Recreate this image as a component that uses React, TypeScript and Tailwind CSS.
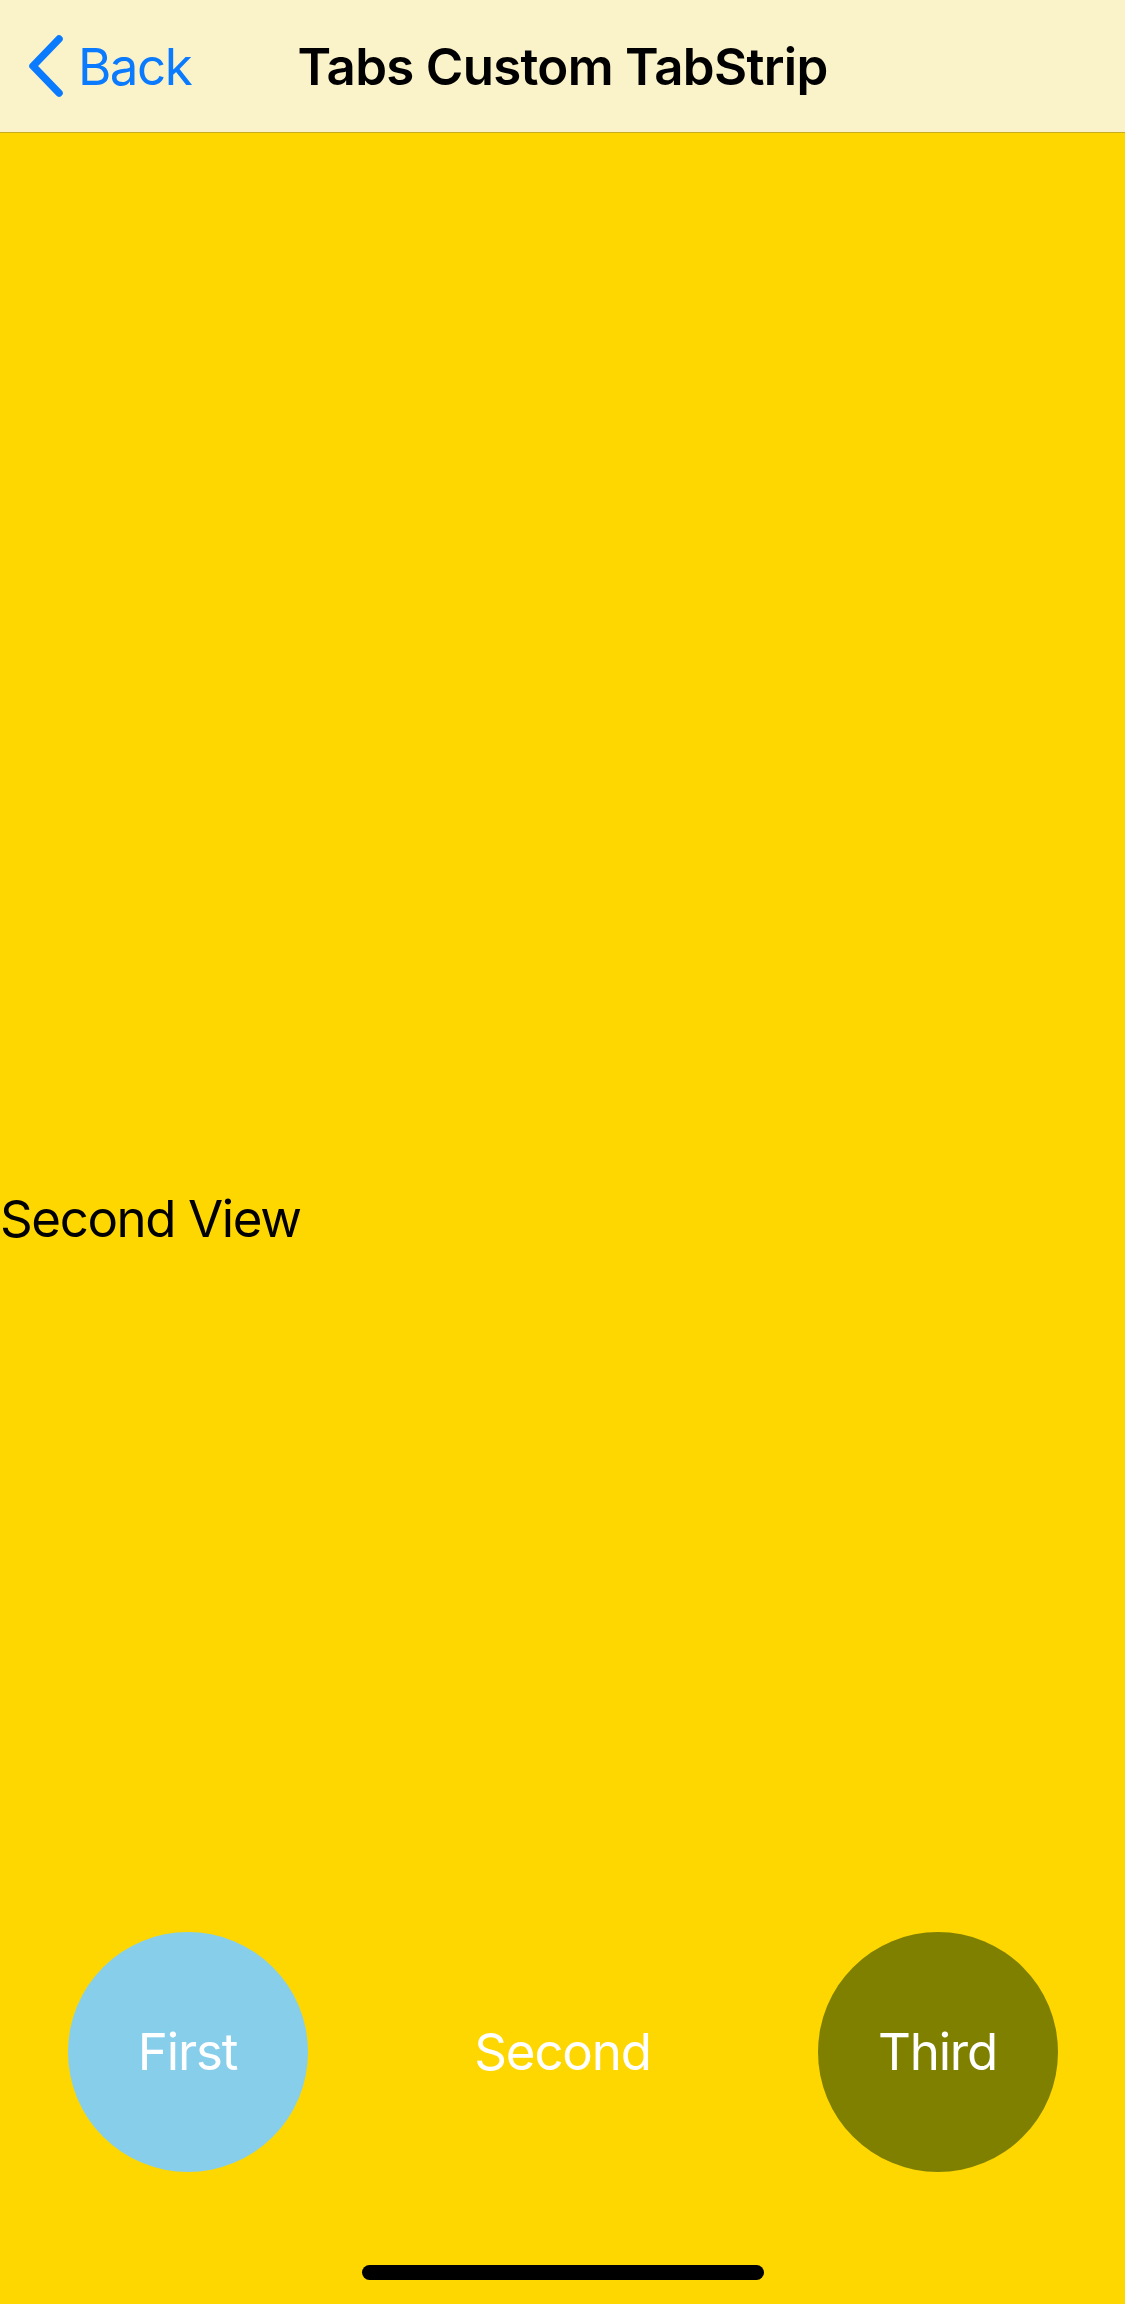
import React from "react";

export default function App() {
  return (
    <div className="relative flex h-[2304px] w-[1125px] flex-col overflow-hidden bg-[#FFD700] font-['Inter','Noto_Sans',sans-serif]">
      <header className="relative flex h-[133px] shrink-0 items-center justify-center border-b border-[#C9AB1E] bg-[#FAF2C8]">
        <div className="absolute left-[24px] top-0 flex h-full items-center gap-[10px] text-[#0A7AFF]">
          <svg width="44" height="66" viewBox="0 0 44 66" fill="none">
            <path d="M35 6 L9 33 L35 60" stroke="#0A7AFF" strokeWidth="7.5" strokeLinecap="round" strokeLinejoin="round" />
          </svg>
          <span className="text-[51px] leading-none tracking-[-1.5px]">Back</span>
        </div>
        <h1 className="text-[51px] font-semibold leading-none tracking-[-0.7px] text-black">Tabs Custom TabStrip</h1>
      </header>
      <main className="flex flex-1 items-center">
        <span className="text-[51px] leading-none tracking-[-1.4px] text-black">Second View</span>
      </main>
      <nav className="absolute left-0 top-[1932px] grid w-full grid-cols-3">
        <div className="flex justify-center">
          <div className="flex h-[240px] w-[240px] items-center justify-center rounded-full bg-[#87CEEB] text-[51px] tracking-[-1.2px] text-white">First</div>
        </div>
        <div className="flex justify-center">
          <div className="flex h-[240px] w-[240px] items-center justify-center rounded-full text-[51px] tracking-[-1.2px] text-white">Second</div>
        </div>
        <div className="flex justify-center">
          <div className="flex h-[240px] w-[240px] items-center justify-center rounded-full bg-[#808000] text-[51px] tracking-[-1.2px] text-white">Third</div>
        </div>
      </nav>
      <div className="absolute bottom-[24px] left-1/2 h-[15px] w-[402px] -translate-x-1/2 rounded-full bg-black" />
    </div>
  );
}
